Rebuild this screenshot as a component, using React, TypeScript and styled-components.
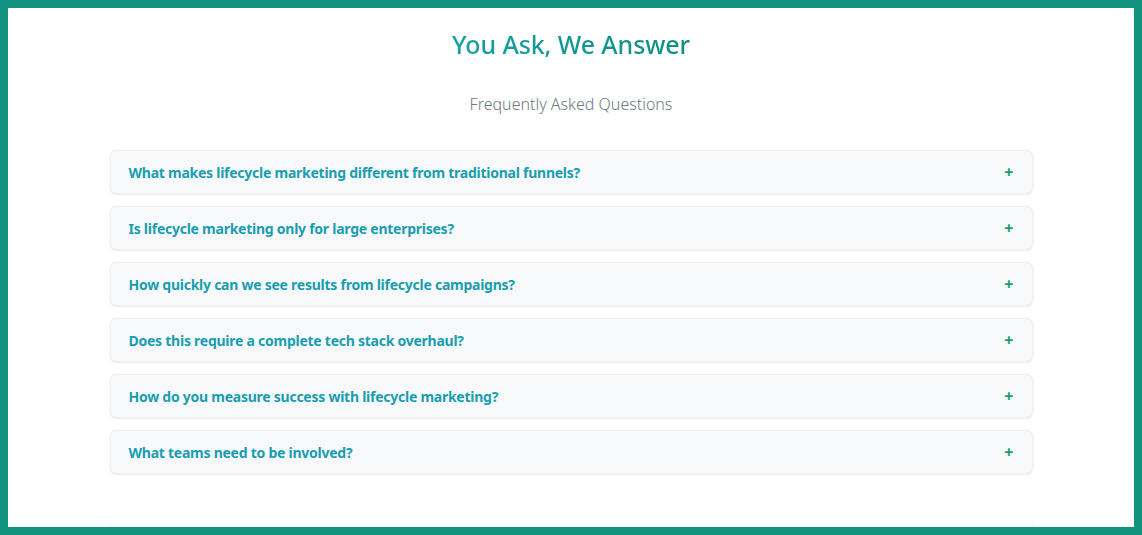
import styled, { createGlobalStyle } from 'styled-components';

const GlobalStyle = createGlobalStyle`
  html, body {
    margin: 0;
    padding: 0;
    background: #ffffff;
  }
  body {
    font-family: 'Noto Sans', 'Open Sans', sans-serif;
  }
`;

const Frame = styled.div`
  box-sizing: border-box;
  width: 1142px;
  height: 535px;
  border: 8px solid #12937f;
  background: #ffffff;
  overflow: hidden;
`;

const Section = styled.section`
  display: flex;
  flex-direction: column;
  align-items: center;
  padding-top: 19px;
`;

const Title = styled.h2`
  margin: 0;
  font-size: 25px;
  line-height: 34px;
  font-weight: 500;
  letter-spacing: -0.1px;
  background: linear-gradient(90deg, #16a0a8 0%, #0f8f7c 100%);
  -webkit-background-clip: text;
  background-clip: text;
  color: transparent;
`;

const Subtitle = styled.p`
  margin: 32px 0 0;
  font-size: 16px;
  line-height: 22px;
  font-weight: 300;
  color: #6b7b80;
`;

const List = styled.div`
  display: flex;
  flex-direction: column;
  gap: 12px;
  width: 923px;
  margin-top: 35px;
`;

const Item = styled.div`
  box-sizing: border-box;
  height: 44px;
  display: flex;
  align-items: center;
  justify-content: space-between;
  padding: 0 18px 0 18px;
  background: #f8f9fb;
  border: 1px solid #eceef1;
  border-radius: 6px;
  box-shadow: 0 1px 2px rgba(0, 0, 0, 0.08);
`;

const Question = styled.span`
  font-size: 14px;
  font-weight: 700;
  color: #199eb0;
  letter-spacing: -0.25px;
`;

const Plus = styled.span`
  font-size: 16px;
  font-weight: 700;
  color: #1b9a70;
  line-height: 1;
`;

const NextBlock = styled.div`
  box-sizing: border-box;
  width: 923px;
  height: 20px;
  margin-top: 49px;
  border-left: 1px solid #f0f1f3;
  border-right: 1px solid #f0f1f3;
`;

const questions = [
  'What makes lifecycle marketing different from traditional funnels?',
  'Is lifecycle marketing only for large enterprises?',
  'How quickly can we see results from lifecycle campaigns?',
  'Does this require a complete tech stack overhaul?',
  'How do you measure success with lifecycle marketing?',
  'What teams need to be involved?',
];

const App = () => (
  <>
    <GlobalStyle />
    <Frame>
      <Section>
        <Title>You Ask, We Answer</Title>
        <Subtitle>Frequently Asked Questions</Subtitle>
        <List>
          {questions.map((q) => (
            <Item key={q}>
              <Question>{q}</Question>
              <Plus>+</Plus>
            </Item>
          ))}
        </List>
        <NextBlock />
      </Section>
    </Frame>
  </>
);

export default App;
